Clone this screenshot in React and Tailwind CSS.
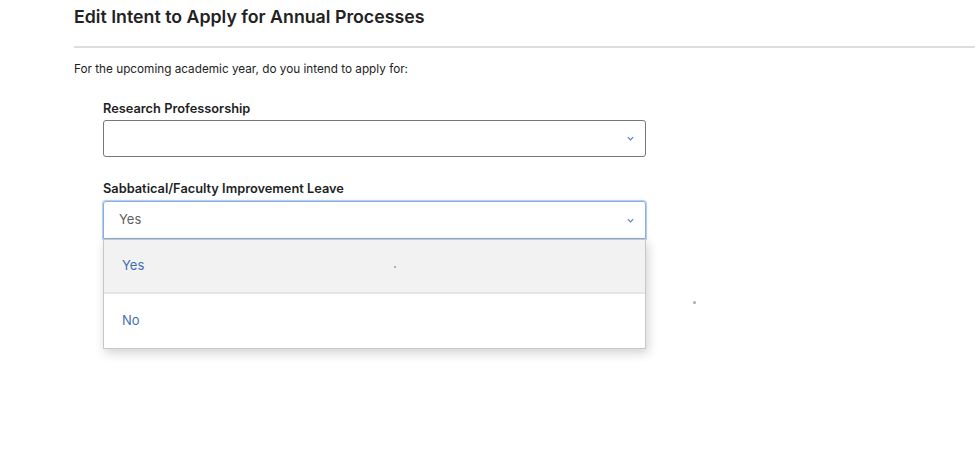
import { useState } from 'react'

function Chevron({ className }) {
  return (
    <svg viewBox="0 0 8 5" className={className} fill="none" stroke="currentColor" strokeWidth="1.4">
      <path d="M1 1l3 3 3-3" />
    </svg>
  )
}

function SelectField({ label, value, open, options = [] }) {
  return (
    <div className="relative w-[543px]">
      <div className="text-[12.8px] font-semibold text-[#1f1f1f] leading-none mb-[5px]">{label}</div>
      <div
        className={
          open
            ? 'h-[38px] flex items-center justify-between rounded-t-[3px] border border-[#8aaee0] shadow-[0_0_0_1px_rgba(138,174,224,0.5),0_0_3px_rgba(138,174,224,0.6)] pl-[15px] pr-[11px]'
            : 'h-[37px] flex items-center justify-between rounded-[3px] border border-[#777] pl-[15px] pr-[11px]'
        }
      >
        <span className="text-[13px] text-[#5f5f5f]">{value}</span>
        <Chevron className="w-[7px] h-[5px] text-[#5b7fc4]" />
      </div>
      {open && (
        <div className="absolute left-0 right-0 top-full bg-white border border-[#c8c8c8] shadow-[2px_4px_10px_rgba(0,0,0,0.18)] z-10">
          {options.map((opt, i) => (
            <div
              key={opt}
              className={
                i === 0
                  ? 'h-[54px] flex items-center pl-[18px] bg-[#f2f2f2] border-b-2 border-[#e6e6e6] text-[13px] text-[#3f6fb0]'
                  : 'h-[54px] flex items-center pl-[18px] text-[13px] text-[#3f6fb0]'
              }
            >
              {opt}
            </div>
          ))}
        </div>
      )}
    </div>
  )
}

export default function App() {
  const [sabbatical] = useState('Yes')

  return (
    <div className="relative w-[977px] h-[452px] bg-white font-['Inter',sans-serif] overflow-hidden">
      <div className="pl-[74px] pt-[6px]">
        <h1 className="text-[17.75px] font-semibold text-[#222] leading-[22px]">
          Edit Intent to Apply for Annual Processes
        </h1>
        <hr className="mt-[18px] border-t-2 border-[#dedede] mr-[2px]" />
        <p className="mt-[13px] text-[11.75px] text-[#222]">
          For the upcoming academic year, do you intend to apply for:
        </p>

        <div className="pl-[29px] mt-[24px] flex flex-col gap-[26px]">
          <SelectField label="Research Professorship" value="" />
          <SelectField label="Sabbatical/Faculty Improvement Leave" value={sabbatical} open options={['Yes', 'No']} />
        </div>
      </div>

      {/* stray pointer dots */}
      <span className="absolute left-[394px] top-[266px] w-[2px] h-[2px] rounded-full bg-[#999] z-20" />
      <span className="absolute left-[693px] top-[301px] w-[3px] h-[3px] rounded-full bg-[#aaa]" />
    </div>
  )
}
